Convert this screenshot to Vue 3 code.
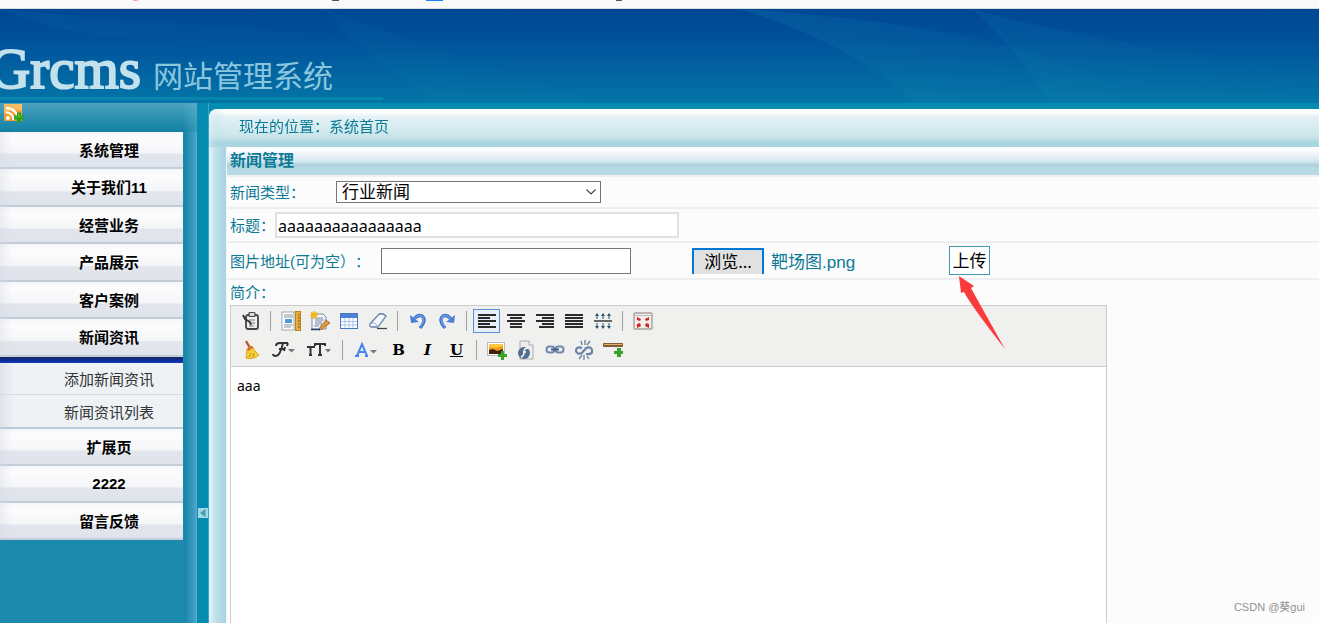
<script setup>
import { ref } from 'vue'

const menuTop = ['系统管理', '关于我们11', '经营业务', '产品展示', '客户案例', '新闻资讯']
const subMenu = ['添加新闻资讯', '新闻资讯列表']
const menuBottom = ['扩展页', '2222', '留言反馈']

const newsType = ref('行业新闻')
const title = ref('aaaaaaaaaaaaaaaa')
const imageUrl = ref('')
const content = ref('aaa')
</script>

<template>
  <div class="page">
    <div class="strip">
      <svg class="strip-marks" width="640" height="2" viewBox="0 0 640 2" aria-hidden="true">
        <rect x="133" width="5" height="1" fill="#f3a9b4" />
        <rect x="332" width="7" height="1" fill="#555" />
        <rect x="426" width="17" height="1" fill="#1683f0" />
        <rect x="616" width="6" height="1" fill="#555" />
      </svg>
    </div>

    <header class="header">
      <svg class="swoosh" viewBox="0 0 1319 94" preserveAspectRatio="none" aria-hidden="true">
        <defs>
          <linearGradient id="sw" x1="0" y1="0" x2="1" y2="0">
            <stop offset="0" stop-color="#1590b0" stop-opacity=".2" />
            <stop offset="1" stop-color="#1590b0" stop-opacity="0" />
          </linearGradient>
        </defs>
        <path d="M740 0C800 18 870 50 915 94H1150C1060 40 930 12 740 0Z" fill="url(#sw)" />
        <path d="M972 0C1000 24 1030 60 1050 94H1319V60C1220 50 1080 30 972 0Z" fill="url(#sw)" opacity=".7" />
        <path d="M0 0C50 20 90 28 180 32H383C280 20 100 10 0 0Z" fill="url(#sw)" opacity=".5" />
        <path d="M325 0C360 40 400 70 440 94H600C500 60 400 30 325 0Z" fill="url(#sw)" opacity=".4" />
      </svg>
      <div class="brand">
        <span class="brand-name">Grcms</span>
        <span class="brand-sub">网站管理系统</span>
      </div>
    </header>

    <div class="body">
      <aside class="side">
        <div class="side-head">
          <svg width="20" height="20" viewBox="0 0 20 20" aria-hidden="true">
            <rect x="0" y="1" width="18" height="17" rx="1" fill="#f39a2d" />
            <path d="M0 1H18V8Q9 5 0 11Z" fill="#f8bd63" />
            <circle cx="4" cy="15" r="2" fill="#fff" />
            <path d="M2 9.500A7 7 0 0 1 9.500 17M2 5A11.500 11.500 0 0 1 14 17" fill="none" stroke="#fff" stroke-width="2.200" />
            <path d="M13 9.500H17V12.500H20V16.500H17V19.500H13V16.500H10V12.500H13Z" fill="#2c9a1c" />
            <path d="M14 10.500H16V13.500H19V14.500H11V13.500H14Z" fill="#4fc030" />
          </svg>
        </div>
        <nav class="menu">
          <ul class="items">
            <li v-for="m in menuTop" :key="m"><a href="#">{{ m }}</a></li>
          </ul>
          <div class="bar"></div>
          <ul class="subs">
            <li v-for="m in subMenu" :key="m"><a href="#">{{ m }}</a></li>
          </ul>
          <ul class="items tail">
            <li v-for="m in menuBottom" :key="m"><a href="#">{{ m }}</a></li>
          </ul>
        </nav>
      </aside>
      <div class="rail">
        <button class="collapse" type="button" aria-label="收起">
          <svg width="10" height="10" viewBox="0 0 10 10"><path d="M7.500 1V9L2 5Z" fill="#3a9fbd" /></svg>
        </button>
      </div>

      <main class="main">
        <div class="crumb">现在的位置：系统首页</div>
        <form class="form" @submit.prevent>
          <h2 class="form-title">新闻管理</h2>
          <div class="row row-type">
            <label for="type">新闻类型：</label>
            <div class="select">
              <select id="type" v-model="newsType">
                <option>行业新闻</option>
              </select>
              <svg width="12" height="8" viewBox="0 0 12 8" aria-hidden="true">
                <path d="M1.500 1.500L6 6L10.500 1.500" fill="none" stroke="#444" stroke-width="1.100" />
              </svg>
            </div>
          </div>
          <div class="row row-title">
            <label for="title">标题：</label>
            <input id="title" v-model="title" type="text" />
          </div>
          <div class="row row-image">
            <label for="img">图片地址(可为空）：</label>
            <input id="img" v-model="imageUrl" type="text" />
            <button class="browse" type="button">浏览...</button>
            <span class="file">靶场图.png</span>
            <button class="upload" type="button">上传</button>
            <svg class="arrow" width="48" height="76" viewBox="0 0 48 76" aria-hidden="true">
              <path d="M1 1L16 11L13 13Q20 26 47 74Q14 32 6 17L3 18Z" fill="#fb3a3a" />
            </svg>
          </div>
          <div class="row row-intro">
            <label for="intro">简介：</label>
            <div class="editor">
              <div class="toolbar">
                <div class="tools">
                  <button type="button" aria-label="模板">
                    <svg viewBox="0 0 20 20" width="20" height="20">
                      <rect x="5" y="4" width="12" height="14" rx="2" fill="#eee" stroke="#444" stroke-width="1.800" />
                      <rect x="8" y="1.500" width="6" height="4" rx="1" fill="#ddd" stroke="#444" stroke-width="1.200" />
                      <path d="M8 9H14M8 12H14M8 15H13" stroke="#777" />
                      <path d="M2 4L4 8L9 11L10 14" fill="none" stroke="#333" stroke-width="1.800" />
                    </svg>
                  </button>
                  <i class="sep"></i>
                  <button type="button" aria-label="预览">
                    <svg viewBox="0 0 20 20" width="20" height="20">
                      <rect x="1" y="1" width="12" height="18" fill="#fff" stroke="#9aa7b5" />
                      <path d="M3 4H12M3 6H12M3 14H12M3 16H10" stroke="#87919c" />
                      <rect x="4" y="8" width="7" height="4" fill="#4f9ad9" />
                      <rect x="14.500" y=".5" width="5" height="19" fill="#e5ae3b" stroke="#c0841f" />
                      <path d="M17 4H19M17 7H19M17 10H19M17 13H19M17 16H19" stroke="#855713" />
                    </svg>
                  </button>
                  <button type="button" aria-label="源代码">
                    <svg viewBox="0 0 20 20" width="20" height="20">
                      <path d="M2 3H13L16 6V18H2Z" fill="#f7f9fc" stroke="#7a8798" />
                      <path d="M5 7H13M5 9H14M5 11H12M5 13H12M4 15H9" stroke="#6f86a8" />
                      <path d="M4 0V8M0 4H8M1 1L7 7M7 1L1 7" stroke="#f5b41e" stroke-width="1.500" />
                      <path d="M16 9L20 12L12 18L9 19L10 16Z" fill="#e4973a" stroke="#8a5a2a" stroke-width=".7" />
                      <path d="M1 18.500H10" stroke="#273f70" stroke-width="1.500" />
                    </svg>
                  </button>
                  <button type="button" aria-label="表格">
                    <svg viewBox="0 0 20 20" width="20" height="20">
                      <rect x="1.500" y="2.500" width="17" height="15" fill="#fff" stroke="#4776c4" />
                      <rect x="2" y="3" width="16" height="4" fill="#4b81d6" />
                      <path d="M2 10.500H18M2 14H18M6 7V17M10 7V17M14 7V17" stroke="#a9c3ea" />
                    </svg>
                  </button>
                  <button type="button" aria-label="清除">
                    <svg viewBox="0 0 20 20" width="20" height="20">
                      <path d="M2 13L11 3Q15 2 18 5L10 16H4Q1 16 2 13Z" fill="#f5f8fc" stroke="#647fa5" stroke-width="1.300" />
                      <path d="M2 13Q7 10 10 16L18 5" fill="none" stroke="#8fa5c4" />
                      <path d="M9 17.500H19" stroke="#444" stroke-width="1.300" />
                    </svg>
                  </button>
                  <i class="sep"></i>
                  <button type="button" aria-label="撤销">
                    <svg viewBox="0 0 20 20" width="20" height="20">
                      <path d="M6 8Q10 3 14 5Q19 9 12 17" fill="none" stroke="#3c72cc" stroke-width="3.400" />
                      <path d="M6 8Q10 3 14 5Q18 9 12 16" fill="none" stroke="#6e9be4" stroke-width="1.500" />
                      <path d="M2 4L3 12L11 11Z" fill="#4b80d8" />
                    </svg>
                  </button>
                  <button type="button" aria-label="重做">
                    <svg viewBox="0 0 20 20" width="20" height="20">
                      <path d="M14 8Q10 3 6 5Q1 9 8 17" fill="none" stroke="#3c72cc" stroke-width="3.400" />
                      <path d="M14 8Q10 3 6 5Q2 9 8 16" fill="none" stroke="#6e9be4" stroke-width="1.500" />
                      <path d="M18 4L17 12L9 11Z" fill="#4b80d8" />
                    </svg>
                  </button>
                  <i class="sep"></i>
                  <button type="button" class="on" aria-label="左对齐">
                    <svg viewBox="0 0 20 20" width="20" height="20"><path d="M1 4H19M1 7H13M1 10H19M1 13H13M1 16H19" stroke="#2a2a2a" stroke-width="1.800" /></svg>
                  </button>
                  <button type="button" aria-label="居中">
                    <svg viewBox="0 0 20 20" width="20" height="20"><path d="M1 4H19M4 7H16M1 10H19M4 13H16M4 16H16" stroke="#2a2a2a" stroke-width="1.800" /></svg>
                  </button>
                  <button type="button" aria-label="右对齐">
                    <svg viewBox="0 0 20 20" width="20" height="20"><path d="M1 4H19M7 7H19M1 10H19M7 13H19M4 16H19" stroke="#2a2a2a" stroke-width="1.800" /></svg>
                  </button>
                  <button type="button" aria-label="两端对齐">
                    <svg viewBox="0 0 20 20" width="20" height="20"><path d="M1 4H19M1 7H19M1 10H19M1 13H19M1 16H19" stroke="#2a2a2a" stroke-width="1.800" /></svg>
                  </button>
                  <button type="button" aria-label="行距">
                    <svg viewBox="0 0 20 20" width="20" height="20">
                      <path d="M1 10H19" stroke="#555" stroke-width="1.800" />
                      <path d="M4 3V8M10 3V8M16 3V8M4 12V17M10 12V17M16 12V17" stroke="#2e5578" />
                      <path d="M4 2L6 5H2ZM10 2L12 5H8ZM16 2L18 5H14ZM4 18L6 15H2ZM10 18L12 15H8ZM16 18L18 15H14Z" fill="#2e5578" />
                    </svg>
                  </button>
                  <i class="sep"></i>
                  <button type="button" aria-label="全屏">
                    <svg viewBox="0 0 20 20" width="20" height="20">
                      <rect x="1" y="2" width="18" height="16" rx="1" fill="#f1eeee" stroke="#a9a0a0" stroke-width="1.400" />
                      <path d="M2 4.500H18" stroke="#c3bcbc" />
                      <path d="M4 6L8 8L7 10L4 9ZM16 6L12 8L13 10L16 9ZM4 17L8 15L7 12L4 13ZM16 17L12 15L13 12L16 13Z" fill="#d92525" />
                    </svg>
                  </button>
                </div>
                <div class="tools">
                  <button type="button" aria-label="格式刷">
                    <svg viewBox="0 0 20 20" width="20" height="20">
                      <path d="M5 1L9 8" stroke="#b4562c" stroke-width="2.400" />
                      <path d="M6 9L11 6L14 11L18 15Q12 20 5 18Z" fill="#f7cf35" stroke="#d9a51d" />
                      <path d="M6 9L11 6L12 8L7 11Z" fill="#dc6539" />
                      <path d="M8 17L10 13M12 17L13 13" stroke="#c18d12" />
                    </svg>
                  </button>
                  <button type="button" class="wide" aria-label="字体">
                    <svg viewBox="0 0 24 20" width="24" height="20">
                      <path d="M5 6Q5 3 9 3H17M12 3Q9 16 5 16Q2 16 2 14M8 9H14M14 7L13 11M17 3L16 6" fill="none" stroke="#333" stroke-width="2" />
                      <path d="M17 9H24L20.500 12.500Z" fill="#777" />
                    </svg>
                  </button>
                  <button type="button" class="wide" aria-label="字号">
                    <svg viewBox="0 0 24 20" width="24" height="20">
                      <path d="M0 8V7H7V8M3.500 7V15M2 15H5M8 6V4H18V6M13 4V15M11 15H15" fill="none" stroke="#333" stroke-width="2" />
                      <path d="M18 9H24L21 12.500Z" fill="#777" />
                    </svg>
                  </button>
                  <i class="sep"></i>
                  <button type="button" class="wide" aria-label="文字颜色">
                    <svg viewBox="0 0 24 20" width="24" height="20">
                      <path d="M3 16L8 4L13 16M5 12H11M1 16H5M11 16H14" fill="none" stroke="#4386ee" stroke-width="2" />
                      <path d="M16 10H23L19.500 13.500Z" fill="#777" />
                    </svg>
                  </button>
                  <button type="button" class="letter" aria-label="粗体"><b>B</b></button>
                  <button type="button" class="letter" aria-label="斜体"><em>I</em></button>
                  <button type="button" class="letter" aria-label="下划线"><u>U</u></button>
                  <i class="sep"></i>
                  <button type="button" aria-label="图片">
                    <svg viewBox="0 0 20 20" width="20" height="20">
                      <rect x=".5" y="2.500" width="17" height="13" fill="#fff" stroke="#bbb" />
                      <rect x="2" y="4" width="14" height="10" fill="#f29a16" />
                      <path d="M2 4H16V6L9 8L2 7Z" fill="#fbca42" />
                      <path d="M2 10L6 9L10 11L16 9V14H2Z" fill="#3c220d" />
                      <path d="M14 11H17V14H20V17H17V20H14V17H11V14H14Z" fill="#35a52a" />
                    </svg>
                  </button>
                  <button type="button" aria-label="动画">
                    <svg viewBox="0 0 20 20" width="20" height="20">
                      <path d="M4 1H13L17 5V19H4Z" fill="#eee" stroke="#aaa" />
                      <path d="M13 1V5H17" fill="#fff" stroke="#aaa" />
                      <circle cx="8" cy="13" r="6" fill="#506f91" />
                      <path d="M12 8Q8 8 8 12Q8 16 5 17M7 12H10" fill="none" stroke="#fff" stroke-width="1.500" />
                    </svg>
                  </button>
                  <button type="button" aria-label="超链接">
                    <svg viewBox="0 0 20 20" width="20" height="20">
                      <rect x="1.500" y="6.500" width="8" height="6" rx="3" fill="none" stroke="#7187ae" stroke-width="2" />
                      <rect x="10.500" y="6.500" width="8" height="6" rx="3" fill="none" stroke="#7187ae" stroke-width="2" />
                      <path d="M6 9.500H14" stroke="#445d8c" stroke-width="2" />
                    </svg>
                  </button>
                  <button type="button" aria-label="取消链接">
                    <svg viewBox="0 0 20 20" width="20" height="20">
                      <path d="M8 8Q2 6 2 11Q3 15 8 13L10 10M12 14Q19 15 18 10Q17 6 12 8L10 11" fill="none" stroke="#6880aa" stroke-width="2.200" />
                      <path d="M7 1L8 5M11 0V5M16 1L13 5M5 19L8 15M10 20V15M15 19L13 16" stroke="#6b7f9d" stroke-width="1.300" />
                    </svg>
                  </button>
                  <button type="button" aria-label="分割线">
                    <svg viewBox="0 0 20 20" width="20" height="20">
                      <rect x="0" y="3" width="20" height="4" rx="1" fill="#875b31" />
                      <path d="M1 4.500H19" stroke="#ddb06f" />
                      <path d="M14 8H18V11H20V14H18V17H14V14H11V11H14Z" fill="#35a52a" />
                    </svg>
                  </button>
                </div>
              </div>
              <textarea id="intro" v-model="content"></textarea>
            </div>
          </div>
        </form>
      </main>
    </div>
    <div class="mark">CSDN @葵gui</div>
  </div>
</template>

<style>
html,
body {
  margin: 0;
  overflow: hidden;
}
</style>

<style scoped>
* {
  box-sizing: border-box;
}
.page {
  position: relative;
  display: flex;
  flex-direction: column;
  height: 100vh;
  overflow: hidden;
  font-family: "Liberation Sans", "Noto Sans CJK SC", sans-serif;
  font-size: 15px;
  text-spacing-trim: space-all;
  color: #0c7a96;
  background: #058bb0;
}
button,
input,
select,
textarea {
  margin: 0;
  padding: 0;
  border-radius: 0;
  font-family: "Noto Sans", "Noto Sans CJK SC", sans-serif;
  font-size: 17px;
  color: #000;
  outline: none;
}
ul {
  margin: 0;
  padding: 0;
  list-style: none;
}
a {
  color: inherit;
  text-decoration: none;
}
.strip {
  flex: none;
  height: 9px;
  background: #f9f9f9;
  border-bottom: 1px solid #dcdcdc;
}
.strip-marks {
  display: block;
}
.header {
  position: relative;
  flex: none;
  height: 94px;
  background: linear-gradient(#004795 0, #00509a 30%, #0475a7 100%);
  overflow: hidden;
}
.swoosh {
  position: absolute;
  inset: 0;
  width: 100%;
  height: 100%;
}
.brand {
  position: relative;
  display: flex;
  gap: 12px;
  width: 383px;
  height: 91px;
  padding-top: 28px;
  line-height: 64px;
  border-bottom: 3px solid #0787ae;
  white-space: nowrap;
}
.brand-name {
  margin-left: -11px;
  font-family: "Liberation Serif", serif;
  font-size: 57px;
  color: #c3e1ec;
  -webkit-text-stroke: 2px #c3e1ec;
}
.brand-sub {
  font-family: "Noto Sans CJK SC", sans-serif;
  font-size: 30px;
  line-height: 74px;
  color: #8ac7de;
}
.body {
  flex: 1;
  display: flex;
  min-height: 0;
}
.side {
  flex: none;
  width: 197px;
  background: linear-gradient(90deg, #1c8aac 183px, #1987aa 185px, #43a0c4 195px, #62b2d0 197px);
}
.side-head {
  height: 29px;
  padding: 0 0 0 4px;
  background: linear-gradient(90deg, transparent 183px, #5cb1cc88 197px), linear-gradient(#4ca2bf, #1b87a9 80%, #1580a4);
}
.side-head svg {
  display: block;
}
.menu {
  width: 183px;
  text-align: center;
}
.menu a {
  display: flex;
  align-items: center;
  justify-content: center;
  height: 100%;
  padding-left: 35px;
}
.items a {
  padding-bottom: 3px;
}
.items li {
  height: 37px;
  background: linear-gradient(90deg, #d5dae666, transparent 12px), linear-gradient(#f4f6f8 0, #fcfcfd 15%, #f5f6f8 56%, #e3e5ec 60%, #dfe4ec 94%, #b4becb 97%, #d3dbe4 100%);
  font-weight: bold;
  color: #000;
}
.items li:nth-child(even) {
  height: 38px;
}
.items.tail li {
  height: 37px;
}
.bar {
  height: 6px;
  background: linear-gradient(#12265f, #0a2ba0 60%, #1040b8);
}
.subs li {
  height: 32px;
  background: linear-gradient(90deg, #dde3ea, #eef2f5 14px);
  border-bottom: 1px solid #d3dae2;
  color: #333;
}
.subs li + li {
  height: 34px;
  border-bottom: 2px solid #bccad6;
}
.rail {
  flex: none;
  width: 12px;
  padding: 405px 1px 0;
  border-right: 1px solid #3ca5c5;
}
.collapse {
  display: block;
  width: 10px;
  height: 10px;
  border: 0;
  background: #a5d8e4;
}
.collapse svg {
  display: block;
}
.main {
  flex: 1;
  display: flex;
  flex-direction: column;
  min-width: 0;
  margin-top: 6px;
  padding-left: 17px;
  border-top-left-radius: 8px;
  background: linear-gradient(90deg, #e2f3f7 0, #bfe0e9 7px, #a9d5e1 16px);
  overflow: hidden;
}
.crumb {
  height: 38px;
  margin-left: -17px;
  padding-left: 30px;
  line-height: 36px;
  background: linear-gradient(#fff 0, #fff 3px, #e4f1f5 8px, #cfe8ed 24px, #c3e1e9 30px, #a9d5e1 33px);
  -webkit-mask-image: linear-gradient(90deg, #0008 0, #000 17px);
  mask-image: linear-gradient(90deg, #0008 0, #000 17px);
}
.form {
  flex: 1;
  display: flex;
  flex-direction: column;
  min-height: 0;
  border-left: 1px solid #eef6f9;
  background: #fcfcfc;
}
.form-title {
  flex: none;
  margin: 0;
  height: 28px;
  padding-left: 3px;
  font-size: 16px;
  line-height: 27px;
  background: linear-gradient(#fff 0, #fff 2px, #e9eff6 9px, #d3ebf1 14px, #aecfdb 18px, #b4dae5 21px, #b8dbe5 28px);
}
.row {
  display: flex;
  align-items: center;
  flex: none;
  padding-left: 3px;
  border-top: 2px solid #efefef;
}
.row label {
  flex: none;
  padding-top: 2px;
  line-height: 22px;
}
.row-type {
  height: 32px;
}
.row-type label {
  width: 106px;
}
.row-title {
  height: 34px;
}
.row-title label {
  width: 45px;
}
.row-image {
  position: relative;
  height: 37px;
}
.row-image label {
  width: 151px;
}
.select {
  position: relative;
  width: 265px;
}
.select select {
  display: block;
  width: 100%;
  height: 22px;
  padding-left: 5px;
  line-height: 20px;
  border: 1px solid #767676;
  background: #fff;
  appearance: none;
}
.select svg {
  position: absolute;
  right: 4px;
  top: 7px;
  pointer-events: none;
}
#title {
  width: 404px;
  height: 26px;
  padding: 2px 1px 0;
  font-size: 16px;
  border: 2px solid #e1e1e1;
  background: #fff;
}
#img {
  width: 250px;
  height: 26px;
  border: 1px solid #767676;
  background: #fff;
}
.browse {
  width: 72px;
  height: 26px;
  margin-left: 61px;
  line-height: 24px;
  border: 2px solid #0078d7;
  border-bottom: 0;
  background: #e1e1e1;
}
.file {
  width: 178px;
  padding-left: 7px;
  margin-right: 7px;
  font-size: 17px;
}
.upload {
  width: 41px;
  height: 29px;
  line-height: 26px;
  border: 1px solid #4597af;
  background: #fff;
}
.arrow {
  position: absolute;
  left: 731px;
  top: 32px;
  z-index: 2;
}
.row-intro {
  flex: 1;
  flex-direction: column;
  align-items: flex-start;
  min-height: 0;
}
.row-intro label {
  height: 25px;
}
.editor {
  flex: 1;
  display: flex;
  flex-direction: column;
  width: 100%;
  max-width: 877px;
  border: 1px solid #ccc;
  border-bottom: 0;
  background: #fff;
}
.toolbar {
  display: flex;
  flex-direction: column;
  gap: 5px;
  padding: 3px 6px 4px;
  background: #f0f0ee;
  border-bottom: 1px solid #ccc;
}
.tools {
  display: flex;
  align-items: center;
  gap: 2px;
  height: 24px;
}
.tools button {
  display: flex;
  align-items: center;
  justify-content: center;
  width: 27px;
  height: 24px;
  border: 1px solid transparent;
  background: none;
}
.tools button.wide {
  width: 34px;
}
.tools button.on {
  border-color: #5690d2;
  background: #e9effa;
}
.tools .letter {
  font-family: "DejaVu Serif", serif;
  font-size: 15px;
  font-weight: bold;
}
.sep {
  width: 1px;
  height: 20px;
  margin: 0 4px;
  background: #a0a0a0;
}
#intro {
  flex: 1;
  display: block;
  width: 100%;
  padding: 9px 6px;
  border: 0;
  resize: none;
  font-size: 14px;
  line-height: 20px;
  background: #fff;
}
.mark {
  position: absolute;
  right: 14px;
  bottom: 7px;
  font-size: 11px;
  line-height: 18px;
  color: #929292;
}
</style>
